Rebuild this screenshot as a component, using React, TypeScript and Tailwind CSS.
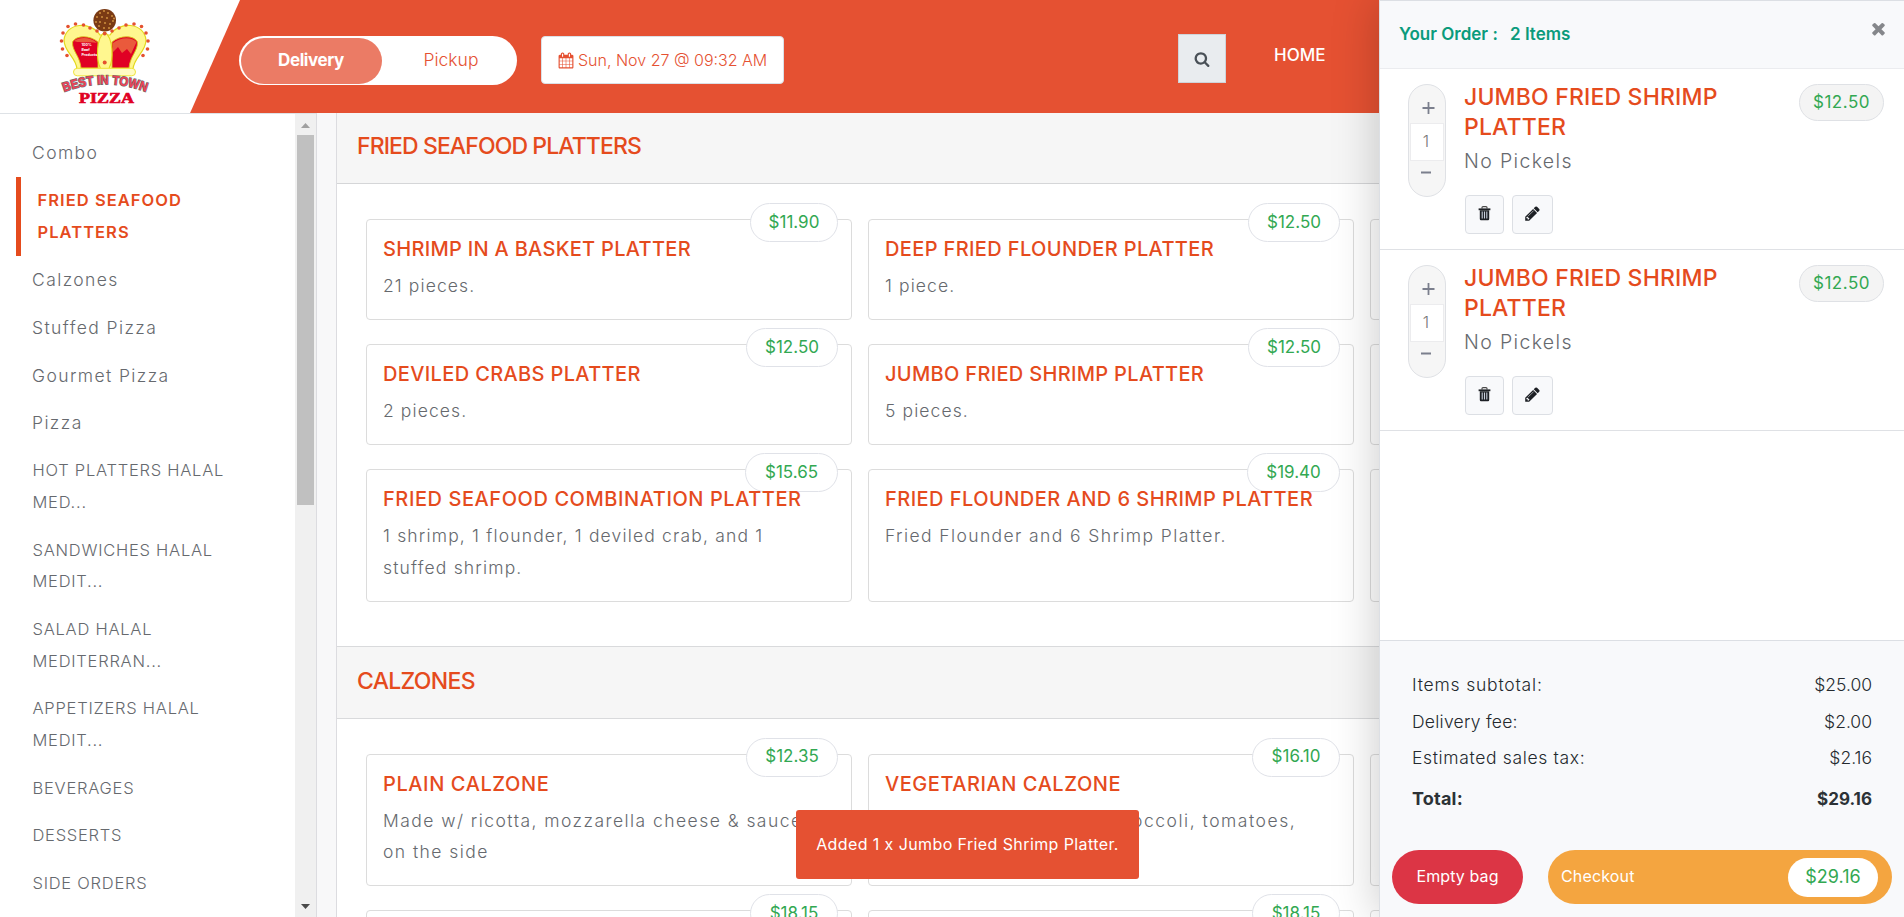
import React from "react";

type Dish = { name: string; text: string; price: string; pill: string; track: string; body: string };

const FONT = "font-['Inter','Noto_Sans',sans-serif]";

const categories: string[][] = [
  ["Combo"],
  ["FRIED SEAFOOD", "PLATTERS"],
  ["Calzones"],
  ["Stuffed Pizza"],
  ["Gourmet Pizza"],
  ["Pizza"],
  ["HOT PLATTERS HALAL", "MED..."],
  ["SANDWICHES HALAL", "MEDIT..."],
  ["SALAD HALAL", "MEDITERRAN..."],
  ["APPETIZERS HALAL", "MEDIT..."],
  ["BEVERAGES"],
  ["DESSERTS"],
  ["SIDE ORDERS"],
];

const blank: Dish = { name: "", text: "", price: "", pill: "", track: "", body: "" };

const seafood: Dish[] = [
  { name: "SHRIMP IN A BASKET PLATTER", text: "21 pieces.", price: "$11.90", pill: "w-[88px]", track: "tracking-[0.3px]", body: "tracking-[1.1px]" },
  { name: "DEEP FRIED FLOUNDER PLATTER", text: "1 piece.", price: "$12.50", pill: "w-[92px]", track: "tracking-[0.37px]", body: "tracking-[1.1px]" },
  blank,
  { name: "DEVILED CRABS PLATTER", text: "2 pieces.", price: "$12.50", pill: "w-[92px]", track: "tracking-[0.36px]", body: "tracking-[1.1px]" },
  { name: "JUMBO FRIED SHRIMP PLATTER", text: "5 pieces.", price: "$12.50", pill: "w-[92px]", track: "tracking-[0.32px]", body: "tracking-[1.1px]" },
  blank,
  { name: "FRIED SEAFOOD COMBINATION PLATTER", text: "1 shrimp, 1 flounder, 1 deviled crab, and 1\nstuffed shrimp.", price: "$15.65", pill: "w-[93px]", track: "tracking-[0.57px]", body: "tracking-[1.17px]" },
  { name: "FRIED FLOUNDER AND 6 SHRIMP PLATTER", text: "Fried Flounder and 6 Shrimp Platter.", price: "$19.40", pill: "w-[93px]", track: "tracking-[0.46px]", body: "tracking-[1.4px]" },
  blank,
];

const calzones: Dish[] = [
  { name: "PLAIN CALZONE", text: "Made w/ ricotta, mozzarella cheese & sauce\non the side", price: "$12.35", pill: "w-[92px]", track: "tracking-[0.6px]", body: "tracking-[1.45px]" },
  { name: "VEGETARIAN CALZONE", text: "Made with mushrooms, broccoli, tomatoes,", price: "$16.10", pill: "w-[88px]", track: "tracking-[0.55px]", body: "tracking-[1.52px]" },
  blank,
  { name: "", text: "", price: "$18.15", pill: "w-[88px]", track: "", body: "" },
  { name: "", text: "", price: "$18.15", pill: "w-[88px]", track: "", body: "" },
  blank,
];

function Glyph({ d, className }: { d: string; className: string }) {
  return (
    <svg viewBox="0 0 1792 1792" className={className} fill="currentColor">
      <path d={d} />
    </svg>
  );
}

const CALENDAR =
  "M192 1664h288v-288h-288v288zm352 0h320v-288h-320v288zm-352-352h288v-320h-288v320zm352 0h320v-320h-320v320zm-352-384h288v-288h-288v288zm736 736h320v-288h-320v288zm-384-736h320v-288h-320v288zm768 736h288v-288h-288v288zm-384-352h320v-320h-320v320zm-352-864v-288q0-13-9.5-22.5t-22.5-9.5h-64q-13 0-22.5 9.5t-9.5 22.5v288q0 13 9.5 22.5t22.5 9.5h64q13 0 22.5-9.5t9.5-22.5zm736 864h288v-320h-288v320zm-384-384h320v-288h-320v288zm384 0h288v-288h-288v288zm32-480v-288q0-13-9.5-22.5t-22.5-9.5h-64q-13 0-22.5 9.5t-9.5 22.5v288q0 13 9.5 22.5t22.5 9.5h64q13 0 22.5-9.5t9.5-22.5zm384-64v1280q0 52-38 90t-90 38h-1408q-52 0-90-38t-38-90v-1280q0-52 38-90t90-38h128v-96q0-66 47-113t113-47h64q66 0 113 47t47 113v96h384v-96q0-66 47-113t113-47h64q66 0 113 47t47 113v96h128q52 0 90 38t38 90z";
const SEARCH =
  "M1216 832q0-185-131.5-316.5t-316.5-131.5-316.5 131.5-131.5 316.5 131.5 316.5 316.5 131.5 316.5-131.5 131.5-316.5zm512 832q0 52-38 90t-90 38q-54 0-90-38l-343-342q-179 124-399 124-143 0-273.5-55.5t-225-150-150-225-55.5-273.5 55.5-273.5 150-225 225-150 273.5-55.5 273.5 55.5 225 150 150 225 55.5 273.5q0 220-124 399l343 343q37 37 37 90z";
const PENCIL =
  "M491 1536l91-91-235-235-91 91v107h128v128h107zm523-928q0-22-22-22-10 0-17 7l-542 542q-7 7-7 17 0 22 22 22 10 0 17-7l542-542q7-7 7-17zm-54-192l416 416-832 832h-416v-416zm683 96q0 53-37 90l-166 166-416-416 166-165q36-38 90-38 53 0 91 38l235 234q37 39 37 91z";
const TIMES =
  "M1490 1322q0 40-28 68l-136 136q-28 28-68 28t-68-28l-294-294-294 294q-28 28-68 28t-68-28l-136-136q-28-28-28-68t28-68l294-294-294-294q-28-28-28-68t28-68l136-136q28-28 68-28t68 28l294 294 294-294q28-28 68-28t68 28l136 136q28 28 28 68t-28 68l-294 294 294 294q28 28 28 68z";

function Trash() {
  return (
    <svg viewBox="0 0 13 15" className="h-[15px] w-[13px]">
      <path d="M4 2.5V1.6Q4 .7 5 .7H8Q9 .7 9 1.6V2.5" fill="none" stroke="#4b4b4b" strokeWidth="1.2" />
      <path d="M.6 2.4H12.4V4.2H.6Z" fill="#1d2025" />
      <path d="M1.8 4.2H11.2V13Q11.2 14.3 10 14.3H3Q1.8 14.3 1.8 13Z" fill="#1d2025" />
      <path d="M4.2 5.6V12.4M6.5 5.6V12.4M8.8 5.6V12.4" stroke="#c9d0dc" strokeWidth="1.1" />
    </svg>
  );
}

const beads: [number, number][] = [
  [21.5, 41], [22.5, 49], [27, 55.5], [23, 33], [28, 26.5], [35.5, 24], [43.5, 25], [50, 28], [57, 31],
  [108, 41], [107.5, 49], [103, 55.5], [106, 33], [101.5, 26.5], [94, 24], [86, 25], [79, 28], [72, 31],
];
const specks: [number, number][] = [
  [60, 13], [64, 11], [68, 13], [72, 16], [57, 17], [62, 17], [67, 18], [73, 21], [56, 22], [60, 22],
  [65, 23], [70, 24], [59, 26], [64, 28], [69, 28], [74, 18.5],
];

function Logo() {
  return (
    <svg viewBox="0 0 130 113" className="ml-[40px] h-[113px] w-[130px]">
      <circle cx="64.7" cy="20.3" r="11.3" fill="#7a3a14" />
      {specks.map(([x, y], i) => (
        <circle key={i} cx={x} cy={y} r="1.1" fill="#c98a3c" />
      ))}
      <path d="M37 69C36 57 24 52 24 40C26 22 51 21 60 35H70C79 21 104 22 106 40C106 52 94 57 93 69Z" fill="#fff78f" stroke="#e3d81d" strokeWidth="1.2" />
      <path d="M41 68C40 56 32 51 32.500 42C36 35 50 35 58 42V68Z" fill="#e00024" stroke="#d8c11a" strokeWidth=".9" />
      <path d="M89 68C90 56 98 51 97.500 42C94 35 80 35 72 42V68Z" fill="#e00024" stroke="#d8c11a" strokeWidth=".9" />
      <path d="M34 41C40 36.500 51 37 57 43C50 41 42 44 34 41Z" fill="#ea5a3c" />
      <path d="M96.500 42C92 36.500 80 37 73 43V52L78 47L82 53L87 49L91 54Z" fill="#ea5a3c" />
      <path d="M64.700 32C73.500 38 73.500 60 69 68.500H60.500C56 60 56 38 64.700 32Z" fill="#fff78f" stroke="#e3d81d" strokeWidth="1.1" />
      <rect x="33.500" y="68.300" width="62" height="7.500" rx="3.700" fill="#fffbc4" stroke="#efe43a" strokeWidth="1" />
      {beads.map(([x, y], i) => (
        <circle key={i} cx={x} cy={y} r="1.800" fill="#e4512f" />
      ))}
      <circle cx="64.700" cy="33.500" r="1.900" fill="#e4512f" />
      <circle cx="64.700" cy="62.500" r="2" fill="#e4512f" />
      <g fill="#fff" fontFamily="Inter, sans-serif" fontWeight="700" fontSize="3.600">
        <text x="41.500" y="46">100%</text>
        <text x="41.500" y="51">Beef</text>
        <text x="41.500" y="56">Products</text>
      </g>
      <path id="arch" d="M24 92Q64.500 76.500 106.500 92" fill="none" />
      <text
        fontFamily="'Liberation Sans', sans-serif"
        fontWeight="700"
        fontSize="13"
        fill="#ee4257"
        stroke="#6a6a6a"
        strokeWidth="1.300"
        paintOrder="stroke"
      >
        <textPath href="#arch" textLength="84" lengthAdjust="spacingAndGlyphs">BEST IN TOWN</textPath>
      </text>
      <text x="39" y="102.500" fill="#e00024" stroke="#e00024" strokeWidth=".7" fontFamily="'Liberation Serif', serif" fontWeight="700" fontSize="15.500" textLength="55" lengthAdjust="spacingAndGlyphs">PIZZA</text>
    </svg>
  );
}

function Card({ dish }: { dish: Dish }) {
  return (
    <div className="relative min-h-[101px] rounded-[4px] border border-[#dcdcdc] bg-white px-[16px] pb-[17.200px] pt-[14px]">
      {dish.price && (
        <div className={`absolute -top-[17px] right-[13px] flex h-[39px] items-center justify-center rounded-full border border-[#e0e2e8] bg-white text-[17px] text-[#32a852] ${dish.pill}`}>
          {dish.price}
        </div>
      )}
      <h3 className={`relative h-[30px] whitespace-nowrap text-[20px] font-medium leading-[30px] text-[#e54b1d] ${dish.track}`}>{dish.name}</h3>
      <p className={`mt-[6px] whitespace-pre text-[17.500px] font-light leading-[31.700px] text-[#66696e] ${dish.body}`}>{dish.text}</p>
    </div>
  );
}

function Section({ title, dishes, first }: { title: string; dishes: Dish[]; first?: boolean }) {
  return (
    <section>
      <div className={first ? "h-[71px] border-b border-[#d5d6d8] bg-[#f6f6f6] pl-[20px]" : "h-[73px] border-y border-[#d9dadc] bg-[#f6f6f6] pl-[20px]"}>
        <h2 className={`text-[23px] font-medium text-[#e54b1d] ${first ? "leading-[66px] tracking-[-0.9px]" : "leading-[69px] tracking-[-0.7px]"}`}>{title}</h2>
      </div>
      <div className="grid grid-cols-[486px_486px_486px] gap-x-[16px] gap-y-[24px] pb-[44px] pl-[29px] pt-[35px]">
        {dishes.map((d, i) => (
          <Card key={i} dish={d} />
        ))}
      </div>
    </section>
  );
}

function Item() {
  return (
    <div className="flex h-[181px] border-b border-[#dfe1e5] pl-[28px] pr-[20px] pt-[15px]">
      <div className="flex h-[113px] w-[38px] shrink-0 flex-col items-center rounded-full border border-[#dfe1e5] bg-[#f6f6f6]">
        <svg viewBox="0 0 38 38" className="h-[38px] w-[38px]">
          <path d="M14.500 23H26.500M20.500 17V29" stroke="#7b7f8d" strokeWidth="1.800" />
        </svg>
        <div className="flex h-[38px] w-[34px] items-center justify-center border border-[#ececee] bg-white pb-[2px] pr-[2px] text-[16px] font-light text-[#777]">1</div>
        <svg viewBox="0 0 38 35" className="h-[35px] w-[38px]">
          <path d="M13 11.500H23" stroke="#7b7f8d" strokeWidth="2" />
        </svg>
      </div>
      <div className="ml-[18px] flex-1">
        <h3 className="-mt-[2px] w-[290px] whitespace-nowrap text-[23px] font-medium leading-[30px] tracking-[0.18px] text-[#e54b1d]">
          JUMBO FRIED SHRIMP
          <br />
          PLATTER
        </h3>
        <p className="mt-[3px] text-[19.500px] font-light leading-[32px] tracking-[1.350px] text-[#66696e]">No Pickels</p>
        <div className="ml-[1px] mt-[18px] flex gap-[8px] text-[#1d2025]">
          <button className="flex h-[39px] w-[39px] items-center justify-center rounded-[4px] border border-[#dcdfe4] bg-[#f8f9fb] pb-[3px]">
            <Trash />
          </button>
          <button className="flex h-[39px] w-[41px] items-center justify-center rounded-[4px] border border-[#dcdfe4] bg-[#f8f9fb] pb-[2px]">
            <Glyph d={PENCIL} className="h-[17px] w-[17px]" />
          </button>
        </div>
      </div>
      <div className="flex h-[37px] w-[85px] items-center justify-center rounded-full border border-[#dfe1e5] bg-[#f4f4f4] text-[17px] tracking-[0.5px] text-[#32a852]">$12.50</div>
    </div>
  );
}

function Row({ label, value, track }: { label: string; value: string; track: string }) {
  return (
    <div className="flex justify-between text-[17.500px] font-light leading-[36.700px] text-[#24292e]">
      <span className={track}>{label}</span>
      <span>{value}</span>
    </div>
  );
}

function Drawer() {
  return (
    <aside className="absolute right-0 top-0 flex h-[917px] w-[525px] flex-col border-l border-t border-[#dcdfe4] bg-white shadow-[0_0_44px_rgba(0,0,0,0.22)]">
      <div className="flex h-[68px] shrink-0 border-b border-[#ebecef] bg-[#f8f9fb] pl-[19px] pr-[16px]">
        <div className="w-[111px] text-[17px] font-semibold leading-[66px] text-[#0a9b7c]">Your Order :</div>
        <div className="flex-1 text-[17px] font-semibold leading-[66px] text-[#0a9b7c]">2 Items</div>
        <Glyph d={TIMES} className="mt-[18px] h-[19px] w-[19px] text-[#85878b]" />
      </div>
      <div className="flex-1">
        <Item />
        <Item />
      </div>
      <div className="h-[277px] shrink-0 border-t border-[#dcdfe4] bg-[#f8f9fb] pl-[12px] pr-[12px] pt-[26px]">
        <div className="pl-[20px] pr-[20px]">
          <Row label="Items subtotal:" value="$25.00" track="tracking-[0.8px]" />
          <Row label="Delivery fee:" value="$2.00" track="tracking-[0.25px]" />
          <Row label="Estimated sales tax:" value="$2.16" track="tracking-[0.65px]" />
          <div className="mt-[4px] flex justify-between text-[17px] font-bold leading-[36px] text-[#2c3236]">
            <span className="text-[18px] tracking-[0.2px]">Total:</span>
            <span>$29.16</span>
          </div>
        </div>
        <div className="mt-[33px] flex gap-[25px]">
          <button className="h-[54px] w-[131px] rounded-full bg-[#dc3545] pb-[3px] text-[16px] tracking-[0.1px] text-white">Empty bag</button>
          <button className="flex h-[54px] w-[344px] items-center justify-between rounded-full bg-[#f4a540] pl-[13px] pr-[14px] text-[16px] text-white">
            <span className="pb-[3px] tracking-[0.15px]">Checkout</span>
            <span className="flex h-[39px] w-[90px] items-center justify-center rounded-full bg-white pb-[2px] text-[18px] text-[#32a852]">$29.16</span>
          </button>
        </div>
      </div>
    </aside>
  );
}

export default function App() {
  return (
    <div className={`relative flex h-[917px] w-[1904px] flex-col overflow-hidden bg-white ${FONT}`}>
      <header className="flex h-[113px] shrink-0 bg-[#e55132]">
        <div className="h-[113px] w-[240px] bg-white [clip-path:polygon(0_0,100%_0,79.200%_100%,0_100%)]">
          <Logo />
        </div>
        <div className="-ml-[1px] mt-[36px] flex h-[49px] w-[278px] items-center rounded-full bg-white p-[2px]">
          <div className="flex h-[46px] w-[141px] items-center justify-center rounded-full bg-[#eb7b65] pr-[1px] text-[17px] font-bold tracking-[-0.4px] text-white">Delivery</div>
          <div className="flex-1 pl-[5px] text-center text-[17.500px] font-light text-[#e55132]">Pickup</div>
        </div>
        <div className="ml-[24px] mt-[36px] flex h-[48px] w-[243px] items-center rounded-[4px] border border-[#dbe0e6] bg-white pl-[16px] text-[16px] font-light text-[#e55132]">
          <Glyph d={CALENDAR} className="mr-[4px] h-[17px] w-[16px]" />
          <span className="whitespace-nowrap">Sun, Nov 27 @ 09:32 AM</span>
        </div>
        <button className="ml-[394px] mt-[34px] flex h-[49px] w-[48px] items-center justify-center border border-[#ced4da] bg-[#e9ecef] text-[#495057]">
          <Glyph d={SEARCH} className="h-[16px] w-[16px]" />
        </button>
        <span className="ml-[48px] text-[17px] font-medium leading-[110px] text-white">HOME</span>
      </header>

      <div className="flex h-[804px]">
        <nav className="h-full w-[295px] shrink-0 border-t border-[#dee2e6] pt-[15.200px]">
          {categories.map((lines, i) => (
            <div
              key={i}
              className={
                i === 1
                  ? "ml-[16px] border-l-[5px] border-[#e54b1d] py-[8px] pl-[16.500px] text-[16.500px] font-semibold leading-[31.700px] tracking-[1.050px] text-[#e54b1d]"
                  : i < 6
                    ? "py-[8px] pl-[32px] text-[17.500px] font-light leading-[31.700px] tracking-[1.400px] text-[#66696e]"
                    : "py-[8px] pl-[32.500px] text-[16.500px] font-light leading-[31.700px] tracking-[0.750px] text-[#66696e]"
              }
            >
              {lines.map((l) => (
                <div key={l} className="whitespace-nowrap">{l}</div>
              ))}
            </div>
          ))}
        </nav>
        <div className="flex h-full w-[21px] shrink-0 flex-col items-center border-t border-[#dee2e6] bg-[#f0f0f0]">
          <svg viewBox="0 0 9 5" className="mb-[7px] mt-[9px] h-[5px] w-[9px]"><path d="M0 5L4.500 0L9 5Z" fill="#a0a0a0" /></svg>
          <div className="h-[370px] w-[17px] bg-[#c0c0c0]" />
          <svg viewBox="0 0 9 5" className="mb-[8px] mt-auto h-[5px] w-[9px]"><path d="M0 0L4.500 5L9 0Z" fill="#4a4a4a" /></svg>
        </div>
        <div className="h-full w-[20px] shrink-0 border-l border-[#dcdce0] bg-[#f8f8f9]" />
        <main className="h-full flex-1 overflow-hidden border-l border-[#dcdce0]">
          <Section title="FRIED SEAFOOD PLATTERS" dishes={seafood} first />
          <Section title="CALZONES" dishes={calzones} />
        </main>
      </div>

      <Drawer />
      <div className="absolute left-[796px] top-[810px] flex h-[69px] w-[343px] items-center justify-center rounded-[3px] bg-[#e55132] pb-[2px] text-[16px] tracking-[0.4px] text-white">
        <span className="whitespace-nowrap">Added 1 x Jumbo Fried Shrimp Platter.</span>
      </div>
    </div>
  );
}
